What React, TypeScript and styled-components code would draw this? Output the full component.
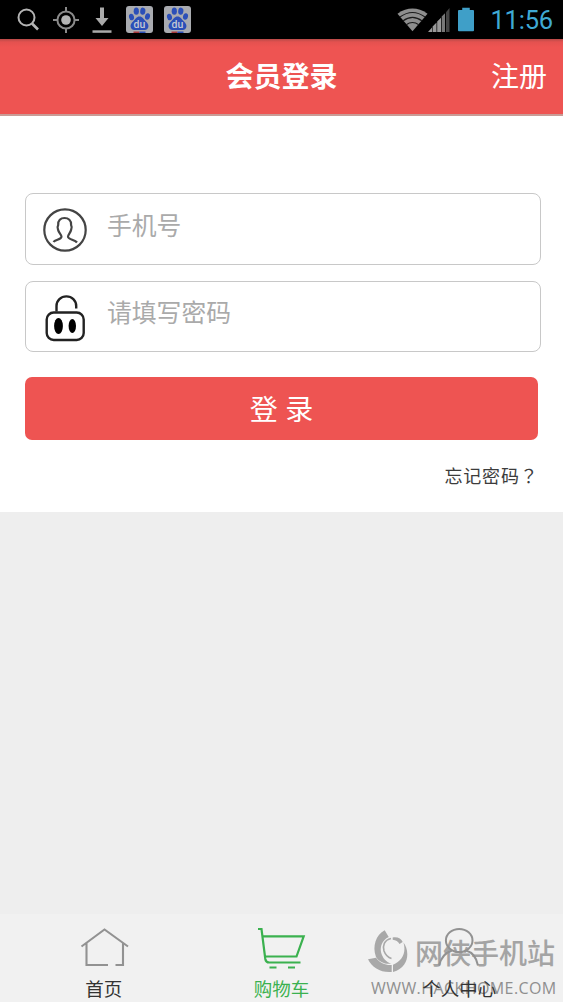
import React from "react";
import styled, { createGlobalStyle } from "styled-components";

const Global = createGlobalStyle`
  * { box-sizing: border-box; }
  body {
    margin: 0;
    background: #eee;
    font-family: "Open Sans", "Noto Sans CJK SC", sans-serif;
  }
`;

const Screen = styled.div`
  width: 563px;
  height: 1002px;
  display: flex;
  flex-direction: column;
  background: #eee;
  overflow: hidden;
`;

const StatusBar = styled.div`
  height: 39px;
  flex: none;
  display: flex;
  align-items: center;
  justify-content: space-between;
  padding: 0 10px 0 16px;
  background: #000;
`;

const StatusGroup = styled.div<{ $gap: number }>`
  display: flex;
  align-items: center;
  gap: ${(p) => p.$gap}px;
  svg { display: block; }
`;

const Clock = styled.span`
  margin-left: 8px;
  font: 400 25.5px/38px Roboto, sans-serif;
  letter-spacing: -0.2px;
  color: #3fa9d4;
`;

const Header = styled.header`
  height: 77px;
  flex: none;
  display: grid;
  grid-template-columns: 1fr auto 1fr;
  align-items: center;
  padding: 0 16px 2px;
  background: linear-gradient(#b84a48 0, #e4514f 3px, #ee5452 8px);
  border-bottom: 2px solid #c99c96;
  color: #fff;
`;

const Title = styled.h1`
  grid-column: 2;
  margin: 0;
  font-size: 28px;
  line-height: 40px;
  font-weight: 700;
`;

const Register = styled.a`
  justify-self: end;
  font-size: 28px;
  line-height: 40px;
`;

const Panel = styled.main`
  height: 396px;
  flex: none;
  padding: 77px 22px 0 25px;
  display: flex;
  flex-direction: column;
  background: #fff;
`;

const Field = styled.label`
  height: 71.5px;
  display: flex;
  align-items: center;
  margin-bottom: 16px;
  padding-left: 17px;
  border: 1.5px solid #c8c8c8;
  border-radius: 8px;
  svg { display: block; flex: none; margin-top: 3px; }
`;

const Placeholder = styled.span`
  margin: 0 0 8px 20px;
  font-size: 24.8px;
  line-height: 36px;
  color: #aaa;
`;

const Submit = styled.button`
  height: 63px;
  margin: 9px 3px 0 0;
  padding: 0;
  border: 0;
  border-radius: 7px;
  background: #ee5452;
  color: #fff;
  font: 400 28px/62px "Open Sans", "Noto Sans CJK SC", sans-serif;
`;

const Forgot = styled.a`
  align-self: flex-end;
  margin: 21px 2.5px 0 0;
  font-size: 18px;
  line-height: 28px;
  letter-spacing: 0.8px;
  color: #3c3c3c;
`;

const CenteredMark = styled.span`
  font-family: "Noto Sans CJK TC", sans-serif;
`;

const TabBar = styled.nav`
  position: relative;
  height: 88px;
  flex: none;
  margin-top: auto;
  padding: 12px 15px 0;
  display: grid;
  grid-template-columns: repeat(3, 1fr);
  background: #f1f1f1;
`;

const Tab = styled.a<{ $active?: boolean }>`
  position: relative;
  z-index: 1;
  display: flex;
  flex-direction: column;
  align-items: center;
  font-size: 18.5px;
  line-height: 26px;
  color: ${(p) => (p.$active ? "#3bb14f" : "#333")};
  svg { display: block; margin-bottom: 6px; }
`;

const Watermark = styled.div`
  position: absolute;
  left: 368px;
  top: 14px;
  width: 190px;
`;

const Brand = styled.div`
  height: 46px;
  display: flex;
  align-items: center;
  gap: 6px;
  font-size: 28px;
  line-height: 46px;
  font-weight: 500;
  white-space: nowrap;
  color: #a4a4a4;
  svg { display: block; flex: none; }
`;

const BrandName = styled.span`
  padding-top: 4px;
`;

const Site = styled.div`
  margin: 4px 0 0 3px;
  font-size: 16px;
  line-height: 20px;
  letter-spacing: 0.42px;
  white-space: nowrap;
  color: #8f8f8f;
`;

const SearchIcon = () => (
  <svg width="24" height="26" viewBox="0 0 24 26" fill="none" stroke="#b4b4b4" strokeWidth="2">
    <circle cx="10.5" cy="10.500" r="8" />
    <path d="M16 16.500l6 6" strokeWidth="2.6" />
  </svg>
);

const GpsIcon = () => (
  <svg width="26" height="26" viewBox="0 0 26 26" fill="none" stroke="#8a8a8a" strokeWidth="2">
    <circle cx="13" cy="13" r="8.6" />
    <path d="M13 0v5M13 21v5M0 13h5M21 13h5" />
    <circle cx="13" cy="13" r="4.8" fill="#b4b4b4" stroke="none" />
  </svg>
);

const DownloadIcon = () => (
  <svg width="20" height="26" viewBox="0 0 20 26" fill="#aaa">
    <path d="M8 0.5h4v10.500h4.500L10 19 3.500 11H8z" />
    <path d="M0.500 23.300h19v2.500H0.500z" />
  </svg>
);

const PawIcon = () => (
  <svg width="27" height="27" viewBox="0 0 27 27">
    <rect width="27" height="27" rx="3" fill="#a9abb0" />
    <g fill="#2b4fb8">
      <ellipse cx="5.500" cy="11" rx="2.500" ry="3.300" transform="rotate(-12 5.500 11)" />
      <ellipse cx="10.300" cy="5.200" rx="2.600" ry="3.600" />
      <ellipse cx="16.800" cy="5.200" rx="2.600" ry="3.600" transform="rotate(8 16.800 5.200)" />
      <ellipse cx="21.500" cy="10.500" rx="2.500" ry="3.300" transform="rotate(12 21.500 10.500)" />
      <path d="M13.500 10.500c3 0 4 2.600 6 4.500 2.600 2.400 3.600 4.400 2.600 6.700-1.300 3-4.600 2.300-8.600 2.300s-7.300.7-8.600-2.300c-1-2.300 0-4.300 2.600-6.700 2-1.900 3-4.500 6-4.500z" />
    </g>
    <text x="13.500" y="21.500" textAnchor="middle" fontFamily="Roboto, sans-serif" fontWeight="500" fontSize="10.500" fill="#c4c8d4">du</text>
    <path d="M7.500 25.500h6v1.500h-6z" fill="#a8373a" />
    <path d="M13.500 25.500h6v1.500h-6z" fill="#2b4fb8" />
  </svg>
);

const WifiIcon = () => (
  <svg width="31" height="24" viewBox="0 0 32 24">
    <path d="M0.500 5.500Q16-5 31.500 5.500L16 23.500z" fill="#8e8e8e" />
    <g fill="none" stroke="#1a1a1a" strokeWidth="1.200">
      <path d="M3 9q13-9.500 26 0M6 13q10-7.500 20 0M9.500 16.800q6.500-4.500 13 0" />
    </g>
  </svg>
);

const SignalIcon = () => (
  <svg width="22" height="24" viewBox="0 0 22 24">
    <g fill="#999">
      <path d="M0 24l4-4.400V24zM4.600 18.500l3.900-4V24H4.600zM9.200 13.400l3.800-3.700V24H9.200z" />
      <path d="M13.700 8.600l3.300-3.300V24h-3.300z" fill="#777" />
      <path d="M18 4.200L21.500 0v24H18z" fill="#444" />
    </g>
  </svg>
);

const BatterySlot = styled.span`
  margin: 0 8px 0 8px;
`;

const BatteryIcon = () => (
  <svg width="16" height="25" viewBox="0 0 17 25" fill="#3f9fc8">
    <path d="M4.500 0h8v2.500H16a1 1 0 0 1 1 1V24a1 1 0 0 1-1 1H1a1 1 0 0 1-1-1V3.500a1 1 0 0 1 1-1h3.500z" />
  </svg>
);

const UserIcon = () => (
  <svg width="44" height="44" viewBox="0 0 44 44" fill="none" stroke="#444" strokeWidth="2.200">
    <circle cx="22" cy="22" r="20.700" />
    <path d="M10.500 34c1.500-2.300 8-2.600 8-5.300 0-2.200-3-4-3.500-7.200-.7-1.500-.6-3 .2-4.500-.4-4.800 2.500-7 6.300-7s7 2.200 6.600 7c.8 1.500.8 3 .1 4.500-.5 3.200-3.200 5-3.200 7.200 0 2.700 7 3 9 5.800" />
  </svg>
);

const LockIcon = () => (
  <svg width="44" height="48" viewBox="0 0 44 48" fill="none" stroke="#222" strokeWidth="2.400">
    <path d="M13.500 17.500v-5.500c0-5.500 4.400-9.600 9.900-9.600s9.800 4.100 9.800 9.600v2.500" />
    <rect x="3.700" y="18.500" width="37" height="27.500" rx="7" />
    <g fill="#000" stroke="none">
      <ellipse cx="15.500" cy="32" rx="4.400" ry="8" />
      <ellipse cx="29.300" cy="32" rx="3.700" ry="7" />
    </g>
  </svg>
);

const HomeIcon = () => (
  <svg width="50" height="44" viewBox="0 0 50 44" fill="none" stroke="#929292" strokeWidth="2.100">
    <path d="M2.500 20.500L25.500 3.500 49 20.500M7.500 17v22h21.500M36.500 39h7.500V17" />
  </svg>
);

const CartIcon = () => (
  <svg width="50" height="44" viewBox="0 0 50 44" fill="none" stroke="#3bb14f" strokeWidth="2.200">
    <path d="M2 3h3.500L9.300 33c.4 2.300 1.600 3.500 4 3.500H44.500" />
    <path d="M6.500 10.300h41.200L40.500 30.500H9.200M13.500 41.500h7M32 41.500h7" />
  </svg>
);

const ProfileIcon = () => (
  <svg width="50" height="44" viewBox="0 0 50 44" fill="none" stroke="#929292" strokeWidth="2">
    <ellipse cx="25.200" cy="14.500" rx="13.300" ry="11.500" />
    <path d="M18 24.500C11 26.500 7 32 5 39.500M32 24.500c7 2 10.500 7 12 15" />
  </svg>
);

const BrandLogo = () => (
  <svg width="41" height="44" viewBox="0 0 41 44" fill="#a8a8a8">
    <path d="M8 28C4 17 8 6 16.700 1.300L20.700 8C14 11 12 18 13 23c1.500 6 5 10 10.300 11.700C17 35.500 11 33 8 28z" />
    <path d="M0 30.300l8-1.500C12 34.500 18 36.500 23.700 36V43C13 44 4 38.500 0 30.300z" />
    <path d="M25 43V35.700C34 32 38.500 24 35.500 13.500 41.500 21 42 38 25 43z" />
    <path
      d="M23 9.500C16 11 14.500 17 16 22c1.500 4 4 6.500 7.500 7.500"
      fill="none"
      stroke="#a8a8a8"
      strokeWidth="1.600"
    />
    <path d="M24.700 8.500c5-.8 8.500 1 10 4.500l-3.200 2c-1.500-2.500-3.500-4-6.800-4.300z" />
  </svg>
);

export default function App() {
  return (
    <>
      <Global />
      <Screen>
        <StatusBar>
          <StatusGroup $gap={13}>
            <SearchIcon />
            <GpsIcon />
            <StatusGroup $gap={14}>
              <DownloadIcon />
              <StatusGroup $gap={11}>
                <PawIcon />
                <PawIcon />
              </StatusGroup>
            </StatusGroup>
          </StatusGroup>
          <StatusGroup $gap={0}>
            <WifiIcon />
            <SignalIcon />
            <BatterySlot>
              <BatteryIcon />
            </BatterySlot>
            <Clock>11:56</Clock>
          </StatusGroup>
        </StatusBar>
        <Header>
          <Title>会员登录</Title>
          <Register>注册</Register>
        </Header>
        <Panel>
          <Field>
            <UserIcon />
            <Placeholder>手机号</Placeholder>
          </Field>
          <Field>
            <LockIcon />
            <Placeholder>请填写密码</Placeholder>
          </Field>
          <Submit>登 录</Submit>
          <Forgot>
            忘记密码<CenteredMark lang="zh-TW">？</CenteredMark>
          </Forgot>
        </Panel>
        <TabBar>
          <Tab>
            <HomeIcon />
            首页
          </Tab>
          <Tab $active>
            <CartIcon />
            购物车
          </Tab>
          <Tab>
            <ProfileIcon />
            个人中心
          </Tab>
          <Watermark>
            <Brand>
              <BrandLogo />
              <BrandName>网侠手机站</BrandName>
            </Brand>
            <Site>WWW.HACKHOME.COM</Site>
          </Watermark>
        </TabBar>
      </Screen>
    </>
  );
}
